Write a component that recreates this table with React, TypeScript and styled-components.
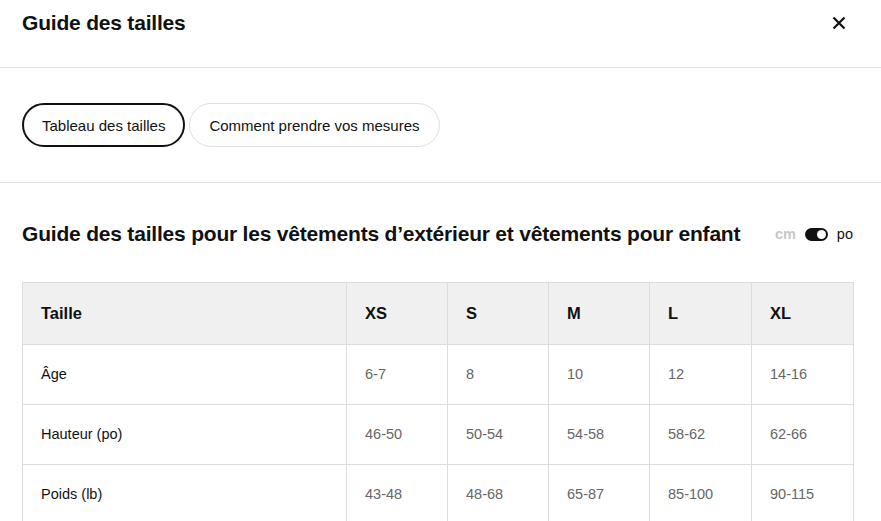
import React from "react";
import styled, { createGlobalStyle } from "styled-components";

const Global = createGlobalStyle`
  html, body { margin: 0; padding: 0; background: #fff; }
  body { font-family: "Liberation Sans", Arial, sans-serif; color: #111; }
  * { box-sizing: border-box; }
`;

const Page = styled.div`
  width: 881px;
  display: flex;
  flex-direction: column;
`;

const Header = styled.header`
  height: 68px;
  padding: 10px 29px 0 22px;
  border-bottom: 1px solid #e2e2e2;
  display: flex;
  justify-content: space-between;
  align-items: flex-start;
`;

const Title = styled.h1`
  margin: 0;
  font-size: 21px;
  line-height: 26px;
  font-weight: 700;
  letter-spacing: -0.2px;
`;

const CloseButton = styled.button`
  border: 0;
  background: none;
  padding: 0;
  width: 26px;
  height: 26px;
  display: flex;
  align-items: center;
  justify-content: center;
  cursor: pointer;
`;

const TabsBar = styled.div`
  padding: 35px 22px 35px;
  border-bottom: 1px solid #e2e2e2;
  display: flex;
  gap: 4px;
`;

const Pill = styled.button<{ $active?: boolean }>`
  height: 44px;
  padding: 0 ${(p) => (p.$active ? "18px" : "19px")};
  border-radius: 22px;
  border: ${(p) => (p.$active ? "2px solid #111" : "1px solid #e0e0e0")};
  background: #fff;
  font-family: "Liberation Sans", Arial, sans-serif;
  font-size: 15px;
  color: #111;
  display: flex;
  align-items: center;
`;

const Section = styled.section`
  padding: 39px 28px 0 22px;
  display: flex;
  flex-direction: column;
  gap: 36px;
`;

const SectionHead = styled.div`
  display: flex;
  justify-content: space-between;
  align-items: center;
`;

const SectionTitle = styled.h2`
  margin: 0;
  font-size: 21px;
  line-height: 24px;
  font-weight: 700;
  letter-spacing: -0.2px;
`;

const UnitSwitch = styled.div`
  display: flex;
  align-items: center;
  gap: 9px;
  font-size: 14.5px;
`;

const Unit = styled.span<{ $on?: boolean }>`
  color: ${(p) => (p.$on ? "#111" : "#c8c8c8")};
  font-weight: ${(p) => (p.$on ? 400 : 700)};
`;

const Track = styled.span`
  width: 23px;
  height: 13px;
  border-radius: 7px;
  background: #111;
  display: flex;
  align-items: center;
  justify-content: flex-end;
  padding: 0 2px;
`;

const Knob = styled.span`
  width: 9px;
  height: 9px;
  border-radius: 50%;
  background: #fff;
`;

const Table = styled.table`
  width: 831px;
  border-collapse: collapse;
  table-layout: fixed;
`;

const Th = styled.th<{ $w?: number }>`
  width: ${(p) => (p.$w ? `${p.$w}px` : "auto")};
  height: 62px;
  background: #f0f0f0;
  border: 1px solid #dcdcdc;
  text-align: left;
  padding: 0 18px;
  font-size: 16.5px;
  font-weight: 700;
  color: #111;
`;

const Td = styled.td<{ $label?: boolean }>`
  height: 59.8px;
  border: 1px solid #dcdcdc;
  padding: 0 18px;
  font-size: 14.5px;
  color: ${(p) => (p.$label ? "#111" : "#666")};
`;

const sizes = ["XS", "S", "M", "L", "XL"];
const widths = [101, 101, 101, 102, 102];
const rows: [string, string[]][] = [
  ["Âge", ["6-7", "8", "10", "12", "14-16"]],
  ["Hauteur (po)", ["46-50", "50-54", "54-58", "58-62", "62-66"]],
  ["Poids (lb)", ["43-48", "48-68", "65-87", "85-100", "90-115"]],
];

export default function App() {
  return (
    <Page>
      <Global />
      <Header>
        <Title>Guide des tailles</Title>
        <CloseButton aria-label="Fermer">
          <svg width="14" height="14" viewBox="0 0 14 14">
            <path d="M1.5 1.5 L12.5 12.5 M12.5 1.5 L1.5 12.5" stroke="#111" strokeWidth="2.2" />
          </svg>
        </CloseButton>
      </Header>
      <TabsBar>
        <Pill $active>Tableau des tailles</Pill>
        <Pill>Comment prendre vos mesures</Pill>
      </TabsBar>
      <Section>
        <SectionHead>
          <SectionTitle>Guide des tailles pour les vêtements d’extérieur et vêtements pour enfant</SectionTitle>
          <UnitSwitch>
            <Unit>cm</Unit>
            <Track>
              <Knob />
            </Track>
            <Unit $on>po</Unit>
          </UnitSwitch>
        </SectionHead>
        <Table>
          <thead>
            <tr>
              <Th $w={324}>Taille</Th>
              {sizes.map((s, i) => (
                <Th key={s} $w={widths[i]}>
                  {s}
                </Th>
              ))}
            </tr>
          </thead>
          <tbody>
            {rows.map(([label, vals]) => (
              <tr key={label}>
                <Td $label>{label}</Td>
                {vals.map((v, i) => (
                  <Td key={i}>{v}</Td>
                ))}
              </tr>
            ))}
          </tbody>
        </Table>
      </Section>
    </Page>
  );
}
